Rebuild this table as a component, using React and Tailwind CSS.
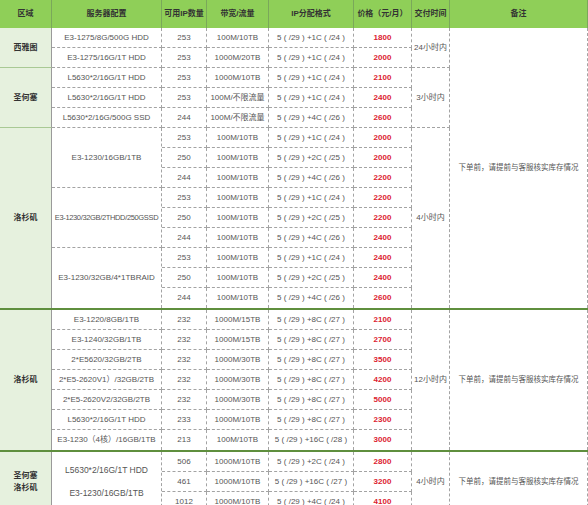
import React from "react";

const COLS = "grid grid-cols-[52px_110px_45px_62px_85px_58px_38px_138px]";
const SPAN = { 1: "", 2: "row-span-2", 3: "row-span-3", 7: "row-span-7", 9: "row-span-9", 14: "row-span-14" };
const LINE = "border-r border-b border-dashed border-[#a3a3a3]";

const HEADERS = ["区域", "服务器配置", "可用IP数量", "带宽/流量", "IP分配格式", "价格（元/月）", "交付时间", "备注"];

const NOTE = "下单前，请提前与客服核实库存情况";

function ip(n, c, m) {
  return `${n} ( /29 ) +${c}C ( /${m} )`;
}

function Cell({ span = 1, className = "", children }) {
  return (
    <div className={`${SPAN[span]} ${LINE} flex items-center justify-center text-center whitespace-nowrap overflow-hidden ${className}`}>
      {children}
    </div>
  );
}

function Region({ span, children, last }) {
  return (
    <div className={`${SPAN[span]} border-r border-[#9a9a9a] ${last ? "" : "border-b border-b-[#a9c994]"} bg-[#e6f1de] flex flex-col items-center justify-center font-bold text-[#333]`}>
      {children}
    </div>
  );
}

function Cells({ r }) {
  return (
    <>
      <Cell>{r[0]}</Cell>
      <Cell>{r[1]}</Cell>
      <Cell>{r[2]}</Cell>
      <Cell className="font-bold text-[#dc2230]">{r[3]}</Cell>
    </>
  );
}

function Note() {
  return <span className="text-[7.5px]">{NOTE}</span>;
}

export default function App() {
  return (
    <div className="w-[588px] h-[505px] overflow-hidden bg-white text-[8px] text-[#555] font-['Liberation_Sans','Noto_Sans_CJK_SC',sans-serif]">
      <div className={`${COLS} h-[28px] bg-[#8fcf58]`}>
        {HEADERS.map((h) => (
          <div key={h} className="border-r border-[#7aa85a] flex items-center justify-center font-bold text-[#333] whitespace-nowrap">
            {h}
          </div>
        ))}
      </div>

      <div className={`${COLS} grid-rows-[repeat(14,20px)]`}>
        <Region span={2}>西雅图</Region>
        <Cell>E3-1275/8G/500G HDD</Cell>
        <Cells r={["253", "100M/10TB", ip(5, 1, 24), "1800"]} />
        <Cell span={2}>24小时内</Cell>
        <Cell span={14} className="border-b-0"><Note /></Cell>
        <Cell>E3-1275/16G/1T HDD</Cell>
        <Cells r={["253", "1000M/20TB", ip(5, 1, 24), "2000"]} />

        <Region span={3}>圣何塞</Region>
        <Cell>L5630*2/16G/1T HDD</Cell>
        <Cells r={["253", "1000M/10TB", ip(5, 1, 24), "2100"]} />
        <Cell span={3}>3小时内</Cell>
        <Cell>L5630*2/16G/1T HDD</Cell>
        <Cells r={["253", "100M/不限流量", ip(5, 1, 24), "2400"]} />
        <Cell>L5630*2/16G/500G SSD</Cell>
        <Cells r={["244", "100M/不限流量", ip(5, 4, 26), "2600"]} />

        <Region span={9} last>洛杉矶</Region>
        <Cell span={3}>E3-1230/16GB/1TB</Cell>
        <Cells r={["253", "100M/10TB", ip(5, 1, 24), "2000"]} />
        <Cell span={9} className="border-b-0">4小时内</Cell>
        <Cells r={["250", "100M/10TB", ip(5, 2, 25), "2000"]} />
        <Cells r={["244", "100M/10TB", ip(5, 4, 26), "2200"]} />
        <Cell span={3} className="text-[7.5px] tracking-[-0.35px]">E3-1230/32GB/2THDD/250GSSD</Cell>
        <Cells r={["253", "100M/10TB", ip(5, 1, 24), "2200"]} />
        <Cells r={["250", "100M/10TB", ip(5, 2, 25), "2200"]} />
        <Cells r={["244", "100M/10TB", ip(5, 4, 26), "2400"]} />
        <Cell span={3} className="border-b-0">E3-1230/32GB/4*1TBRAID</Cell>
        <Cells r={["253", "100M/10TB", ip(5, 1, 24), "2400"]} />
        <Cells r={["250", "100M/10TB", ip(5, 2, 25), "2400"]} />
        <div className="contents [&>div]:border-b-0">
          <Cells r={["244", "100M/10TB", ip(5, 4, 26), "2600"]} />
        </div>
      </div>

      <div className={`${COLS} grid-rows-[repeat(7,20px)] border-t-2 border-[#5f8f3e]`}>
        <Region span={7} last>洛杉矶</Region>
        <Cell>E3-1220/8GB/1TB</Cell>
        <Cells r={["232", "1000M/15TB", ip(5, 8, 27), "2100"]} />
        <Cell span={7} className="border-b-0">12小时内</Cell>
        <Cell span={7} className="border-b-0"><Note /></Cell>
        <Cell>E3-1240/32GB/1TB</Cell>
        <Cells r={["232", "1000M/15TB", ip(5, 8, 27), "2700"]} />
        <Cell>2*E5620/32GB/2TB</Cell>
        <Cells r={["232", "1000M/30TB", ip(5, 8, 27), "3500"]} />
        <Cell>2*E5-2620V1）/32GB/2TB</Cell>
        <Cells r={["232", "1000M/30TB", ip(5, 8, 27), "4200"]} />
        <Cell>2*E5-2620V2/32GB/2TB</Cell>
        <Cells r={["232", "1000M/30TB", ip(5, 8, 27), "5000"]} />
        <Cell>L5630*2/16G/1T HDD</Cell>
        <Cells r={["233", "1000M/10TB", ip(5, 8, 27), "2300"]} />
        <Cell className="border-b-0">E3-1230（4核）/16GB/1TB</Cell>
        <div className="contents [&>div]:border-b-0">
          <Cells r={["213", "100M/10TB", ip(5, 16, 28), "3000"]} />
        </div>
      </div>

      <div className={`${COLS} grid-rows-[repeat(3,20px)] border-t-2 border-[#5f8f3e]`}>
        <Region span={3} last>
          <span>圣何塞</span>
          <span>洛杉矶</span>
        </Region>
        <Cell span={3} className="flex-col gap-[10px] text-[8.5px]">
          <span>L5630*2/16G/1T HDD</span>
          <span>E3-1230/16GB/1TB</span>
        </Cell>
        <Cells r={["506", "1000M/10TB", ip(5, 2, 24), "2800"]} />
        <Cell span={3}>4小时内</Cell>
        <Cell span={3}><Note /></Cell>
        <Cells r={["461", "1000M/10TB", ip(5, 16, 27), "3200"]} />
        <Cells r={["1012", "1000M/10TB", ip(5, 4, 24), "4100"]} />
      </div>
    </div>
  );
}
